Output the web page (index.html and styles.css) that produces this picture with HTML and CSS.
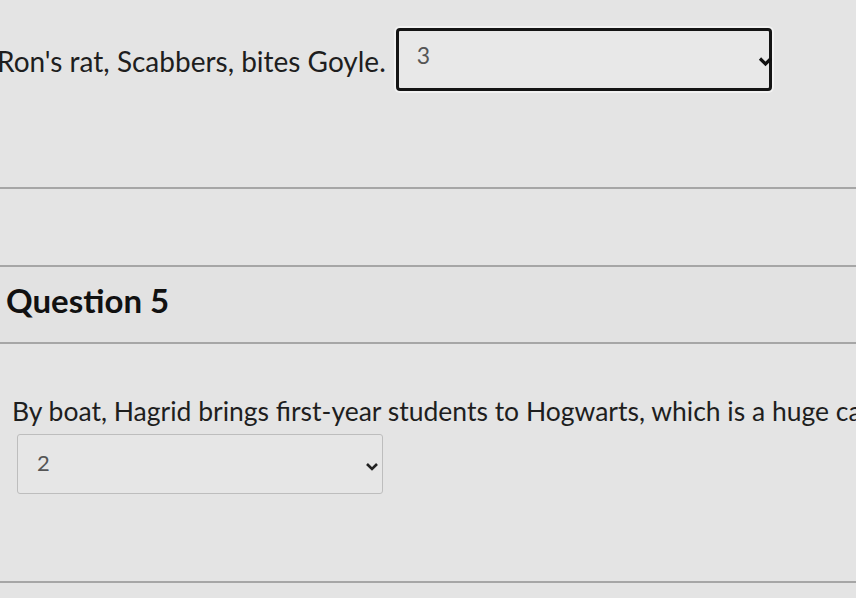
FILE: index.html
```html
<!DOCTYPE html>
<html lang="en">
<head>
<meta charset="utf-8">
<title>Quiz</title>
<link rel="stylesheet" href="styles.css">
</head>
<body>
<div class="page">
  <section class="q-body q4">
    <div class="inline-row">
      <span class="stmt">Ron's rat, Scabbers, bites Goyle.</span>
      <div class="select focused">
        <span class="val">3</span>
        <svg class="chev" width="15" height="11" viewBox="0 0 15 11"><path d="M2 2.5 L7.5 8 L13 2.5" fill="none" stroke="#111" stroke-width="3.2"/></svg>
      </div>
    </div>
  </section>
  <div class="rule"></div>
  <div class="gap-band"></div>
  <div class="rule"></div>
  <header class="q-header"><h2>Question 5</h2></header>
  <div class="rule"></div>
  <section class="q-body q5">
    <p class="stmt">By boat, Hagrid brings first-year students to Hogwarts, which is a huge castle.</p>
    <div class="select plain">
      <span class="val">2</span>
      <svg class="chev" width="14" height="10" viewBox="0 0 14 10"><path d="M2 2 L7 7 L12 2" fill="none" stroke="#222" stroke-width="2.6"/></svg>
    </div>
  </section>
  <div class="rule"></div>
</div>
</body>
</html>
```

FILE: styles.css
```css
html, body {
  margin: 0;
  padding: 0;
  background: #e4e4e4;
  overflow: hidden;
}
.page {
  width: 856px;
  height: 598px;
  font-family: Lato, "Open Sans", sans-serif;
  color: #1e1e1e;
  overflow: hidden;
}
.q4 {
  height: 187px;
  padding-top: 28px;
  box-sizing: border-box;
}
.inline-row {
  display: flex;
  align-items: flex-start;
  margin-left: -3px;
}
.stmt {
  font-size: 28px;
  white-space: nowrap;
}
.inline-row .stmt {
  margin-top: 16px;
  margin-right: 10px;
}
.select {
  position: relative;
  box-sizing: border-box;
  display: flex;
  align-items: flex-start;
  background: #e8e8e8;
  flex-shrink: 0;
}
.select .val {
  color: #555;
}
.select.focused {
  width: 376px;
  height: 63px;
  border: 3px solid #141414;
  border-radius: 4px;
  box-shadow: 0 0 0 2px #f2f2f2;
  padding: 10px 0 0 18px;
}
.select.focused .val {
  font-size: 23px;
}
.select.focused .chev {
  position: absolute;
  right: -4px;
  top: 25px;
}
.rule {
  height: 2px;
  background: #a6a6a6;
}
.gap-band {
  height: 76px;
}
.q-header {
  height: 75px;
  display: flex;
  align-items: center;
  padding: 0 0 10px 6px;
  box-sizing: border-box;
  background: #e2e2e2;
}
.q-header h2 {
  margin: 0;
  font-size: 33px;
  font-weight: 700;
  color: #111;
}
.q5 {
  height: 237px;
  box-sizing: border-box;
  padding: 51px 0 0 12px;
}
.q5 .stmt {
  margin: 0;
  font-size: 26.5px;
  line-height: 32px;
}
.select.plain {
  margin: 7px 0 0 5px;
  width: 366px;
  height: 60px;
  border: 1px solid #bdbdbd;
  border-radius: 3px;
  padding: 14px 0 0 19px;
  background: #e6e6e6;
}
.select.plain .val {
  font-size: 22px;
}
.select.plain .chev {
  position: absolute;
  right: 3px;
  top: 27px;
}
```
